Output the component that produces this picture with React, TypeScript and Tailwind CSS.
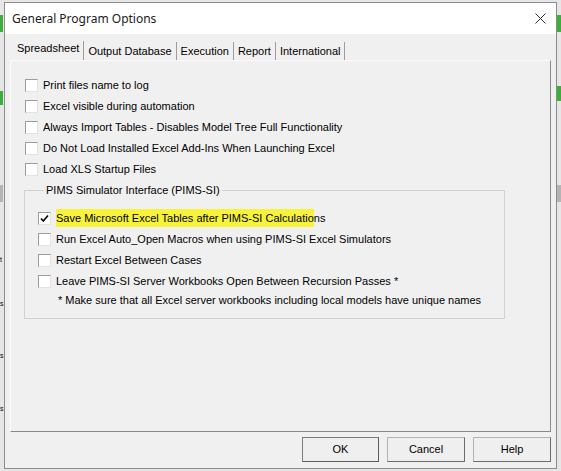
import React from "react";

const body = { fontFamily: '"Liberation Sans", Arial, sans-serif' };

function Box({ checked }: { checked?: boolean }) {
  return (
    <span className="w-[13px] h-[13px] shrink-0 bg-white border border-t-[#9c9c9c] border-l-[#9c9c9c] border-r-[#e2e2e2] border-b-[#e2e2e2] flex items-center justify-center">
      {checked && (
        <svg width="9" height="9" viewBox="0 0 9 9">
          <path d="M1 4.5 L3.3 7 L8 1.5" fill="none" stroke="#111" strokeWidth="1.8" />
        </svg>
      )}
    </span>
  );
}

function Row({ label, checked, children }: { label?: string; checked?: boolean; children?: React.ReactNode }) {
  return (
    <div className="h-[21px] flex items-center gap-[5px]">
      <Box checked={checked} />
      <span className="text-[11px] text-black leading-none whitespace-nowrap">{children ?? label}</span>
    </div>
  );
}

const tabs = ["Spreadsheet", "Output Database", "Execution", "Report", "International"];

export default function App() {
  return (
    <div className="w-[561px] h-[471px] bg-[#e6e6e6] relative overflow-hidden pl-[4px] pt-[2px]" style={body}>
      {/* bits of the desktop behind the dialog */}
      <div className="absolute left-0 top-[15px] w-[3px] h-[17px] bg-[#3dae3a]" />
      <div className="absolute left-0 top-[91px] w-[3px] h-[14px] bg-[#3dae3a]" />
      <div className="absolute right-0 top-[15px] w-[4px] h-[17px] bg-[#3dae3a]" />
      <div className="absolute right-0 top-[86px] w-[4px] h-[15px] bg-[#3dae3a]" />
      <div className="absolute left-0 top-[185px] w-[3px] h-[17px] bg-[#b4b4b4]" />
      <div className="absolute right-0 top-[185px] w-[4px] h-[17px] bg-[#b4b4b4]" />
      <span className="absolute left-0 top-[256px] text-[7px] leading-none">t</span>
      <span className="absolute left-0 top-[300px] text-[7px] leading-none">s</span>
      <span className="absolute left-0 top-[352px] text-[7px] leading-none">s</span>
      <span className="absolute left-0 top-[405px] text-[7px] leading-none">s</span>

      <div className="relative w-[553px] h-[467px] border border-[#8c8c8c] bg-[#f0f0f0] flex flex-col">
        <div className="h-[31px] bg-white flex items-center justify-between pl-[7px] pr-[10px] shrink-0">
          <span className="text-[12px] text-[#1b1b1b]" style={{ fontFamily: '"Noto Sans", "Open Sans", sans-serif' }}>
            General Program Options
          </span>
          <svg width="11" height="11" viewBox="0 0 11 11">
            <path d="M0.5 0.5 L10.5 10.5 M10.5 0.5 L0.5 10.5" stroke="#333" strokeWidth="1" />
          </svg>
        </div>

        <div className="flex-1 flex flex-col px-[5px]">
          <div className="h-[26px] flex items-end pl-0">
            {tabs.map((t, i) => (
              <div
                key={t}
                className={
                  i === 0
                    ? "h-[19px] pl-[7px] pr-[4px] border-r border-[#9d9d9d] flex items-start text-[11px] text-black leading-[15px]"
                    : "h-[18px] pl-[4px] pr-[4px] border-r border-[#9d9d9d] flex items-start pt-[2px] text-[11px] text-black leading-[15px]"
                }
              >
                {t}
              </div>
            ))}
          </div>

          <div className="h-[372px] border border-t-[#fbfbfb] border-l-[#fbfbfb] border-r-[#8a8a8a] border-b-[#8a8a8a] pt-[14px] pl-[14px] flex flex-col">
            <Row label="Print files name to log" />
            <Row label="Excel visible during automation" />
            <Row label="Always Import Tables - Disables Model Tree Full Functionality" />
            <Row label="Do Not Load Installed Excel Add-Ins When Launching Excel" />
            <Row label="Load XLS Startup Files" />

            <fieldset className="mt-[4px] -ml-[1px] w-[481px] border border-[#d2d2d2] pl-[13px] pt-[11px] pb-[9px]">
              <legend className="ml-[6px] px-[2px] text-[11px] leading-[13px] text-black">PIMS Simulator Interface (PIMS-SI)</legend>
              <Row checked>
                <span className="bg-[#f7f33a] py-[3px]">Save Microsoft Excel Tables after PIMS-SI Calculatio</span>ns
              </Row>
              <Row label="Run Excel Auto_Open Macros when using PIMS-SI Excel Simulators" />
              <Row label="Restart Excel Between Cases" />
              <Row label="Leave PIMS-SI Server Workbooks Open Between Recursion Passes *" />
              <div className="h-[17px] flex items-center pl-[20px] text-[11px] text-black whitespace-nowrap">
                * Make sure that all Excel server workbooks including local models have unique names
              </div>
            </fieldset>
          </div>

          <div className="flex justify-end gap-[8px] mt-[5px]">
            {["OK", "Cancel", "Help"].map((b) => (
              <button
                key={b}
                className={
                  b === "OK"
                    ? "w-[77px] h-[25px] bg-[#efefef] border border-[#7c7c7c] border-b-[#5c5c5c] border-r-[#5c5c5c] text-[11px] text-black"
                    : "w-[78px] h-[25px] bg-[#efefef] border border-[#b4b4b4] border-b-[#6c6c6c] border-r-[#6c6c6c] text-[11px] text-black"
                }
              >
                {b}
              </button>
            ))}
          </div>
        </div>
      </div>
    </div>
  );
}
